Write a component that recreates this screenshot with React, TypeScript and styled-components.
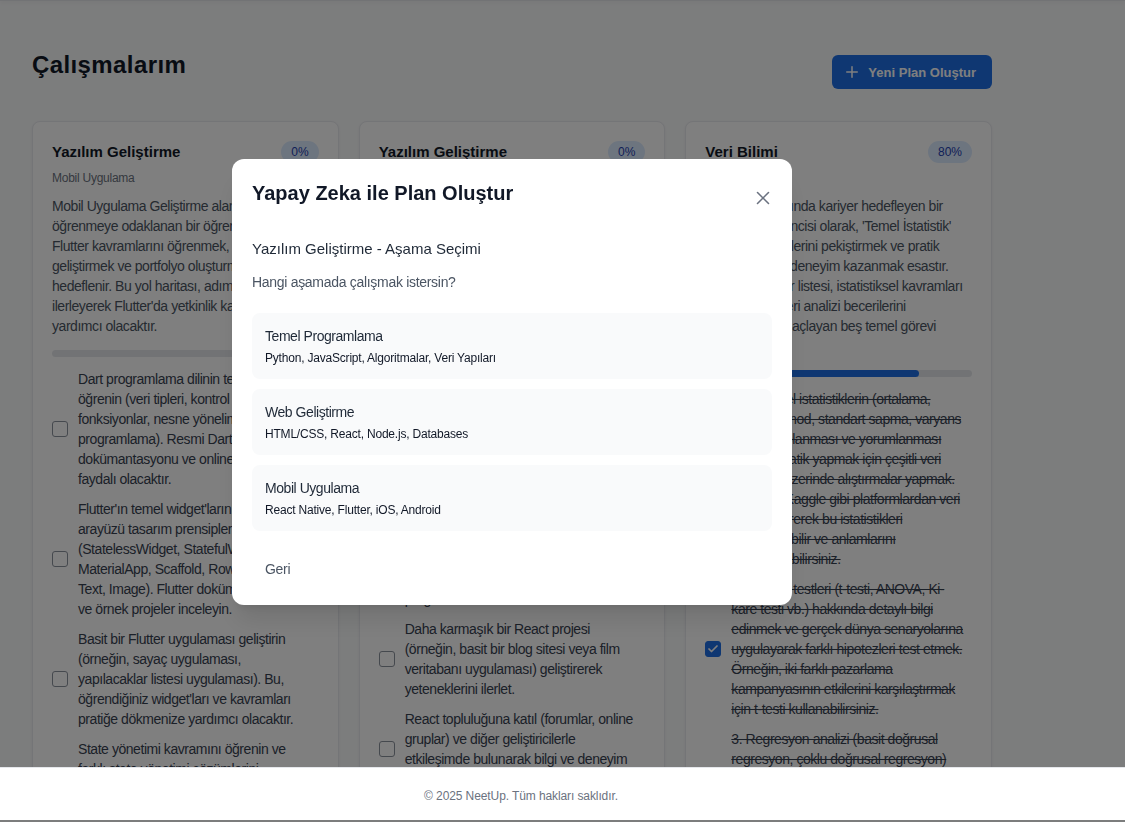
import React from "react";
import styled, { createGlobalStyle } from "styled-components";
import { Check, Plus, X } from "lucide-react";

const BLUE = "#1f6fe5";

const GlobalStyle = createGlobalStyle`
  * { box-sizing: border-box; }
  html, body {
    margin: 0;
    padding: 0;
    background: #f9fafb;
  }
  body {
    font-family: "Liberation Sans", Arial, sans-serif;
    color: #111827;
  }
`;

type Task = { text: string; done: boolean };

type Plan = {
  id: number;
  title: string;
  subtitle: string;
  description: string;
  progress: number;
  tasks: Task[];
};

type Stage = { name: string; topics: string };

// metinler ekrandaki satır kırılımlarıyla birlikte tutuluyor (white-space: pre-line)
const plans: Plan[] = [
  {
    id: 1,
    title: "Yazılım Geliştirme",
    subtitle: "Mobil Uygulama",
    progress: 0,
    description:
      "Mobil Uygulama Geliştirme alanında Flutter'ı\nöğrenmeye odaklanan bir öğrenci olarak,\nFlutter kavramlarını öğrenmek, uygulama\ngeliştirmek ve portfolyo oluşturmak\nhedeflenir. Bu yol haritası, adım adım\nilerleyerek Flutter'da yetkinlik kazanmanıza\nyardımcı olacaktır.",
    tasks: [
      {
        text: "Dart programlama dilinin temellerini\nöğrenin (veri tipleri, kontrol yapıları,\nfonksiyonlar, nesne yönelimli\nprogramlama). Resmi Dart\ndokümantasyonu ve online kaynaklar\nfaydalı olacaktır.",
        done: false,
      },
      {
        text: "Flutter'ın temel widget'larını ve kullanıcı\narayüzü tasarım prensiplerini öğrenin\n(StatelessWidget, StatefulWidget,\nMaterialApp, Scaffold, Row, Column,\nText, Image). Flutter dokümanlarını\nve örnek projeler inceleyin.",
        done: false,
      },
      {
        text: "Basit bir Flutter uygulaması geliştirin\n(örneğin, sayaç uygulaması,\nyapılacaklar listesi uygulaması). Bu,\nöğrendiğiniz widget'ları ve kavramları\npratiğe dökmenize yardımcı olacaktır.",
        done: false,
      },
      {
        text: "State yönetimi kavramını öğrenin ve\nfarklı state yönetimi çözümlerini\n(Provider, Riverpod, Bloc) inceleyin.\nKüçük bir örnek üzerinde bu\nyaklaşımları karşılaştırın.",
        done: false,
      },
      {
        text: "API entegrasyonu yaparak gerçek verilerle çalışan bir uygulama geliştirin.",
        done: false,
      },
    ],
  },
  {
    id: 2,
    title: "Yazılım Geliştirme",
    subtitle: "Web Geliştirme",
    progress: 0,
    description:
      "Web Geliştirme alanında React kullanarak\nmodern ve etkileşimli kullanıcı arayüzleri\noluşturmayı öğrenmek isteyen bir öğrenci\niçin hazırlanan bu plan, temel web\nteknolojilerinden başlayarak React\nekosistemine kadar giden adımları içerir.\nHer adım pratik projelerle desteklenir.",
    tasks: [
      {
        text: "HTML, CSS ve JavaScript temellerini\nöğren. Basit statik web sayfaları\noluşturarak HTML etiketleri ve CSS\nseçicileri ile pratik yap.",
        done: false,
      },
      {
        text: "React'in temel kavramlarını keşfet:\nbileşenler, props, state ve JSX gibi\nkonuları resmi dokümantasyon ve\nonline kurslarla öğren.",
        done: false,
      },
      {
        text: "Küçük bir yapılacaklar listesi\nuygulaması yaparak bileşen tabanlı\nprogramlama.",
        done: false,
      },
      {
        text: "Daha karmaşık bir React projesi\n(örneğin, basit bir blog sitesi veya film\nveritabanı uygulaması) geliştirerek\nyeteneklerini ilerlet.",
        done: false,
      },
      {
        text: "React topluluğuna katıl (forumlar, online\ngruplar) ve diğer geliştiricilerle\netkileşimde bulunarak bilgi ve deneyim\npaylaş.",
        done: false,
      },
    ],
  },
  {
    id: 3,
    title: "Veri Bilimi",
    subtitle: "Temel İstatistik",
    progress: 80,
    description:
      "Veri Bilimi alanında kariyer hedefleyen bir\nüniversite öğrencisi olarak, 'Temel İstatistik'\ndersindeki bilgilerini pekiştirmek ve pratik\nuygulamalarla deneyim kazanmak esastır.\nBu yapılacaklar listesi, istatistiksel kavramları\nanlamayı ve veri analizi becerilerini\ngeliştirmeyi amaçlayan beş temel görevi\niçerir.",
    tasks: [
      {
        text: "1. Betimsel istatistiklerin (ortalama,\nmedyan, mod, standart sapma, varyans\nvb.) hesaplanması ve yorumlanması\nüzerine pratik yapmak için çeşitli veri\nkümeleri üzerinde alıştırmalar yapmak.\nÖrneğin, Kaggle gibi platformlardan veri\nsetleri indirerek bu istatistikleri\nhesaplayabilir ve anlamlarını\nyorumlayabilirsiniz.",
        done: true,
      },
      {
        text: "2. Hipotez testleri (t-testi, ANOVA, Ki-\nkare testi vb.) hakkında detaylı bilgi\nedinmek ve gerçek dünya senaryolarına\nuygulayarak farklı hipotezleri test etmek.\nÖrneğin, iki farklı pazarlama\nkampanyasının etkilerini karşılaştırmak\niçin t-testi kullanabilirsiniz.",
        done: true,
      },
      {
        text: "3. Regresyon analizi (basit doğrusal\nregresyon, çoklu doğrusal regresyon)\nyöntemlerini öğrenmek ve gerçek veri\nsetleri üzerinde modeller kurmak.\nÖrneğin, ev fiyatlarını tahmin eden\nbir model oluşturabilirsiniz.",
        done: true,
      },
      {
        text: "4. Veri görselleştirme kütüphaneleri (Matplotlib, Seaborn) ile bulguları sunmak.",
        done: true,
      },
      {
        text: "5. Tüm konuları küçük bir analiz projesinde birleştirmek.",
        done: false,
      },
    ],
  },
];

const stages: Stage[] = [
  { name: "Temel Programlama", topics: "Python, JavaScript, Algoritmalar, Veri Yapıları" },
  { name: "Web Geliştirme", topics: "HTML/CSS, React, Node.js, Databases" },
  { name: "Mobil Uygulama", topics: "React Native, Flutter, iOS, Android" },
];

/* ---------- sayfa ---------- */

const Main = styled.main`
  height: 767px;
  overflow: hidden;
`;

const TopBar = styled.div`
  height: 1px;
  background: #e5e7eb;
  box-shadow: 0 1px 4px rgba(0, 0, 0, 0.14);
`;

const Container = styled.div`
  width: 1024px;
  padding: 48px 32px 0;
`;

const HeaderRow = styled.div`
  display: flex;
  justify-content: space-between;
  align-items: flex-start;
  margin-bottom: 32px;
`;

const PageTitle = styled.h1`
  margin: 0;
  font-size: 24px;
  line-height: 32px;
  font-weight: 700;
  letter-spacing: 0.4px;
  color: #111827;
`;

const NewPlanButton = styled.button`
  margin-top: 6px;
  height: 34px;
  display: inline-flex;
  align-items: center;
  gap: 7px;
  padding: 0 16px 0 11px;
  border: 0;
  border-radius: 6px;
  background: ${BLUE};
  color: #fff;
  font-family: inherit;
  font-size: 13px;
  font-weight: 700;
  cursor: pointer;
`;

const CardGrid = styled.div`
  display: grid;
  grid-template-columns: repeat(3, 1fr);
  gap: 20px;
  align-items: start;
`;

const Card = styled.article`
  background: #fff;
  border: 1px solid #e8eaee;
  border-radius: 8px;
  padding: 19px;
  box-shadow: 0 1px 3px rgba(0, 0, 0, 0.06);
`;

const CardHead = styled.div`
  display: flex;
  justify-content: space-between;
  align-items: center;
  height: 22px;
`;

const CardTitle = styled.h3`
  margin: 0;
  font-size: 15px;
  line-height: 22px;
  font-weight: 700;
  color: #111827;
`;

const Badge = styled.span`
  height: 22px;
  padding: 0 10px;
  border-radius: 999px;
  background: #dbeafe;
  color: #1e40af;
  font-size: 12px;
  line-height: 22px;
`;

const CardSubtitle = styled.p`
  margin: 7px 0 0;
  font-size: 12px;
  line-height: 16px;
  letter-spacing: -0.25px;
  color: #6b7280;
`;

const CardText = styled.p`
  margin: 10px 0 0;
  font-size: 14px;
  line-height: 20px;
  letter-spacing: -0.45px;
  color: #4b5563;
  white-space: pre-line;
`;

const Track = styled.div`
  margin-top: 14px;
  height: 7px;
  border-radius: 999px;
  background: #e5e7eb;
  overflow: hidden;
`;

const Fill = styled.div`
  height: 100%;
  border-radius: 999px;
  background: ${BLUE};
`;

const TaskList = styled.ul`
  margin: 12px 0 0;
  padding: 0;
  list-style: none;
  display: flex;
  flex-direction: column;
  gap: 10px;
`;

const TaskRow = styled.li`
  display: flex;
  align-items: center;
  gap: 10px;
`;

const Box = styled.span<{ $checked: boolean }>`
  flex: 0 0 16px;
  width: 16px;
  height: 16px;
  border-radius: 3px;
  border: 1.5px solid ${(p) => (p.$checked ? BLUE : "#8b929c")};
  background: ${(p) => (p.$checked ? BLUE : "#fff")};
  color: #fff;
  display: flex;
  align-items: center;
  justify-content: center;
`;

const TaskText = styled.span<{ $done: boolean }>`
  font-size: 14px;
  line-height: 20px;
  letter-spacing: -0.45px;
  color: #374151;
  white-space: pre-line;
  text-decoration: ${(p) => (p.$done ? "line-through" : "none")};
`;

/* ---------- modal ---------- */

const Overlay = styled.div`
  position: fixed;
  inset: 0;
  background: rgba(0, 0, 0, 0.5);
  z-index: 50;
`;

const DialogLayer = styled.div`
  position: fixed;
  top: 0;
  left: 0;
  width: 1024px;
  height: 763px;
  display: flex;
  align-items: center;
  justify-content: center;
  z-index: 51;
`;

const Modal = styled.div`
  width: 560px;
  padding: 20px;
  border-radius: 12px;
  background: #fff;
  box-shadow: 0 20px 25px -5px rgba(0, 0, 0, 0.1), 0 8px 10px -6px rgba(0, 0, 0, 0.1);
`;

const ModalHead = styled.div`
  display: flex;
  justify-content: space-between;
  align-items: flex-start;
`;

const ModalTitle = styled.h2`
  margin: 0;
  font-size: 20px;
  line-height: 28px;
  font-weight: 700;
  color: #111827;
`;

const CloseButton = styled.button`
  width: 22px;
  height: 22px;
  margin: 8px -2px 0 0;
  padding: 0;
  border: 0;
  background: none;
  color: #6b7280;
  display: flex;
  cursor: pointer;
`;

const StageHeading = styled.h3`
  margin: 29px 0 0;
  font-size: 15px;
  line-height: 22px;
  font-weight: 400;
  color: #1f2937;
`;

const Question = styled.p`
  margin: 12px 0 0;
  font-size: 14px;
  line-height: 20px;
  letter-spacing: -0.3px;
  color: #4b5563;
`;

const OptionList = styled.div`
  margin-top: 21px;
  display: flex;
  flex-direction: column;
  gap: 10px;
`;

const OptionButton = styled.button`
  display: block;
  width: 100%;
  padding: 13px;
  border: 0;
  border-radius: 8px;
  background: #f9fafb;
  text-align: left;
  font-family: inherit;
  cursor: pointer;
`;

const OptionName = styled.div`
  font-size: 14px;
  line-height: 20px;
  letter-spacing: -0.45px;
  color: #1f2937;
`;

const OptionTopics = styled.div`
  margin-top: 4px;
  font-size: 12px;
  line-height: 16px;
  letter-spacing: -0.2px;
  color: #111827;
`;

const BackButton = styled.button`
  margin-top: 22px;
  height: 32px;
  padding: 0 13px;
  border: 0;
  border-radius: 6px;
  background: transparent;
  font-family: inherit;
  font-size: 14px;
  letter-spacing: -0.3px;
  color: #4b5563;
  cursor: pointer;
`;

/* ---------- footer ---------- */

const Footer = styled.footer`
  position: relative;
  z-index: 60;
  height: 53px;
  background: #fff;
  border-top: 1px solid #e5e7eb;
`;

const FooterText = styled.p`
  width: 1042px;
  margin: 0;
  padding-top: 20px;
  text-align: center;
  font-size: 12px;
  line-height: 16px;
  letter-spacing: -0.1px;
  color: #6b7280;
`;

const PlanCard = ({ plan }: { plan: Plan }) => (
  <Card>
    <CardHead>
      <CardTitle>{plan.title}</CardTitle>
      <Badge>{plan.progress}%</Badge>
    </CardHead>
    <CardSubtitle>{plan.subtitle}</CardSubtitle>
    <CardText>{plan.description}</CardText>
    <Track>
      <Fill style={{ width: `${plan.progress}%` }} />
    </Track>
    <TaskList>
      {plan.tasks.map((task, i) => (
        <TaskRow key={i}>
          <Box $checked={task.done}>{task.done && <Check size={12} strokeWidth={3.5} />}</Box>
          <TaskText $done={task.done}>{task.text}</TaskText>
        </TaskRow>
      ))}
    </TaskList>
  </Card>
);

const StageModal = () => (
  <>
    <Overlay />
    <DialogLayer>
      <Modal role="dialog" aria-modal="true">
        <ModalHead>
          <ModalTitle>Yapay Zeka ile Plan Oluştur</ModalTitle>
          <CloseButton aria-label="Kapat">
            <X size={22} strokeWidth={1.7} />
          </CloseButton>
        </ModalHead>
        <StageHeading>Yazılım Geliştirme - Aşama Seçimi</StageHeading>
        <Question>Hangi aşamada çalışmak istersin?</Question>
        <OptionList>
          {stages.map((stage) => (
            <OptionButton key={stage.name}>
              <OptionName>{stage.name}</OptionName>
              <OptionTopics>{stage.topics}</OptionTopics>
            </OptionButton>
          ))}
        </OptionList>
        <BackButton>Geri</BackButton>
      </Modal>
    </DialogLayer>
  </>
);

export default function App() {
  return (
    <>
      <GlobalStyle />
      <Main>
        <TopBar />
        <Container>
          <HeaderRow>
            <PageTitle>Çalışmalarım</PageTitle>
            <NewPlanButton>
              <Plus size={18} strokeWidth={2} />
              Yeni Plan Oluştur
            </NewPlanButton>
          </HeaderRow>
          <CardGrid>
            {plans.map((plan) => (
              <PlanCard key={plan.id} plan={plan} />
            ))}
          </CardGrid>
        </Container>
      </Main>
      <Footer>
        <FooterText>© 2025 NeetUp. Tüm hakları saklıdır.</FooterText>
      </Footer>
      <StageModal />
    </>
  );
}
